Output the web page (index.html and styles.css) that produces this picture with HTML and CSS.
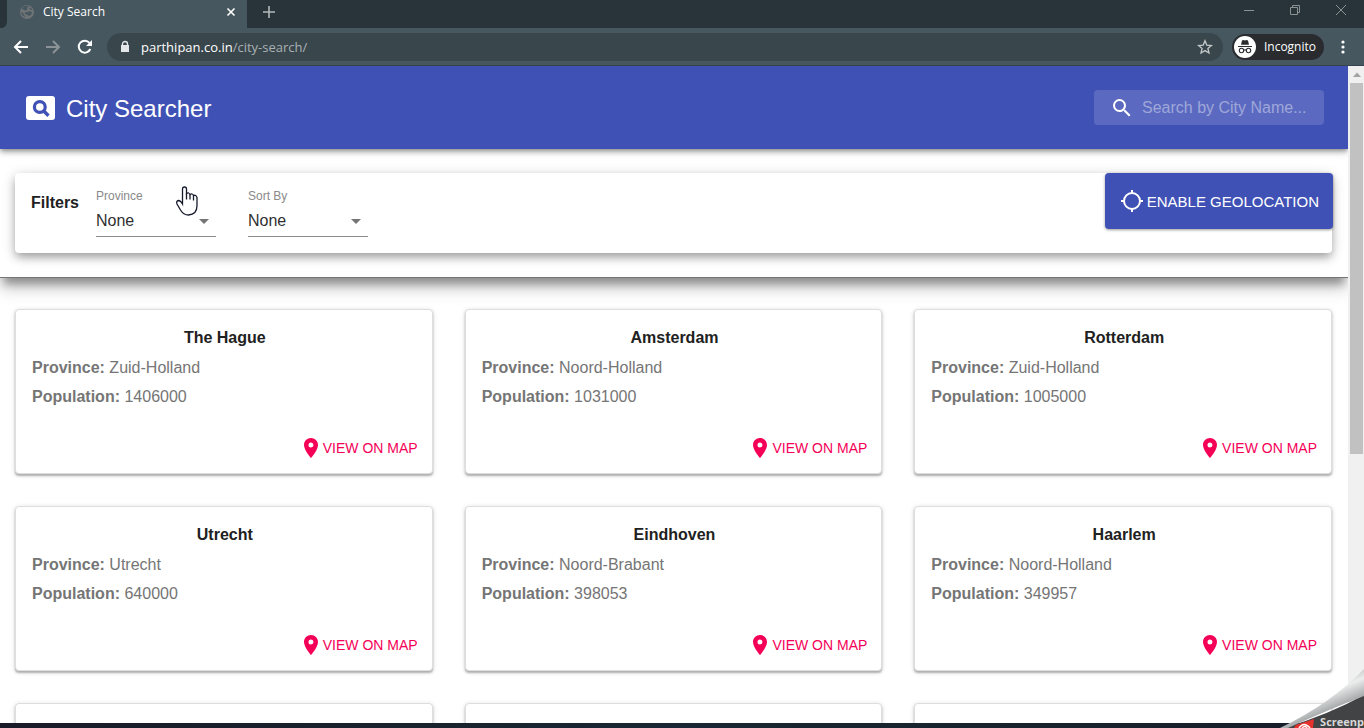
FILE: index.html
```html
<!DOCTYPE html>
<html lang="en">
<head>
<meta charset="utf-8">
<title>City Search</title>
<link rel="stylesheet" href="styles.css">
</head>
<body>
<svg class="defs" aria-hidden="true">
  <symbol id="pin" viewBox="0 0 24 24"><path fill="currentColor" d="M12 2C8.13 2 5 5.13 5 9c0 5.25 7 13 7 13s7-7.75 7-13c0-3.87-3.13-7-7-7zm0 9.500a2.500 2.500 0 1 1 0-5 2.500 2.500 0 0 1 0 5z"/></symbol>
  <symbol id="drop" viewBox="0 0 24 24"><path fill="currentColor" d="M7 10l5 5 5-5z"/></symbol>
</svg>
<div class="tabstrip">
  <div class="tab-prev"></div>
  <div class="tab">
    <svg class="favicon" viewBox="0 0 16 16"><circle cx="8" cy="8" r="7" fill="#6e7375"/><path fill="#465760" d="M2.500 5c1.500-.2 2.500.6 3.500 1.500 1.200.3 1.500-1 2.500-1.500L8 3.500l2-1.300C6.500 1 3.500 2.500 2.500 5zM8 8l3-.7 2 1.200-1 2.500-2.500 1-1-1.500H6.500L5.500 9zM2 8l2 1 1 2 1.500 2C4 12.500 2.300 10.500 2 8zM11 3l2.500 2.500L12 6l-1.500-1z"/></svg>
    <span class="tab-title">City Search</span>
    <button class="icon-button" aria-label="Close tab"><svg width="10" height="10" viewBox="0 0 10 10"><path d="M1.500 1.500l7 7M8.500 1.500l-7 7" stroke="#fff" stroke-width="1.600"/></svg></button>
  </div>
  <button class="icon-button new-tab" aria-label="New tab"><svg width="14" height="14" viewBox="0 0 14 14"><path d="M7 1v12M1 7h12" stroke="#b3b8ba" stroke-width="1.600"/></svg></button>
  <div class="window-controls">
    <button class="icon-button" aria-label="Minimize"><svg width="12" height="12" viewBox="0 0 12 12"><path d="M1 6.500h10" stroke="#8b9194"/></svg></button>
    <button class="icon-button" aria-label="Restore"><svg width="12" height="12" viewBox="0 0 12 12"><path d="M1.500 3.500h7v7h-7zM3.500 3.500v-2h7v7h-2" fill="none" stroke="#8b9194"/></svg></button>
    <button class="icon-button" aria-label="Close window"><svg width="12" height="12" viewBox="0 0 12 12"><path d="M1 1l10 10M11 1L1 11" stroke="#8b9194"/></svg></button>
  </div>
</div>
<div class="toolbar">
  <div class="nav">
    <button class="icon-button" aria-label="Back"><svg width="16" height="16" viewBox="0 0 16 16"><path d="M15 8H2.500M8 2L2 8l6 6" fill="none" stroke="#fff" stroke-width="2"/></svg></button>
    <button class="icon-button" aria-label="Forward"><svg width="16" height="16" viewBox="0 0 16 16"><path d="M1 8h12.500M8 2l6 6-6 6" fill="none" stroke="#8b9397" stroke-width="2"/></svg></button>
    <button class="icon-button" aria-label="Reload"><svg width="16" height="16" viewBox="0 0 16 16"><path d="M13.300 10A6 6 0 1 1 12.500 4" fill="none" stroke="#fff" stroke-width="2"/><path d="M15 1v6H9z" fill="#fff"/></svg></button>
  </div>
  <div class="omnibox">
    <svg width="10" height="14" viewBox="0 0 10 14"><path d="M2.500 6V4a2.500 2.500 0 0 1 5 0v2" fill="none" stroke="#e4e6e7" stroke-width="1.400"/><path d="M1 5h8v7H1z" fill="#e4e6e7"/></svg>
    <span class="url"><span class="host">parthipan.co.in</span>/city-search/</span>
    <button class="icon-button" aria-label="Bookmark this page"><svg width="16" height="16" viewBox="0 0 16 16"><path d="M8 1.800l1.800 4.300 4.600.4-3.500 3 1.100 4.500L8 11.600 4 14l1.100-4.500-3.500-3 4.600-.4z" fill="none" stroke="#c3c8ca" stroke-width="1.300"/></svg></button>
  </div>
  <button class="incognito">
    <svg width="22" height="22" viewBox="0 0 22 22"><circle cx="11" cy="11" r="11" fill="#fff"/><path d="M7 8.800L8 4.500l1.300-.5 1.700.5 1.700-.5 1.300.5 1 4.300zM4 10h14v1H4z" fill="#292b2f"/><g fill="none" stroke="#292b2f" stroke-width="1.100"><circle cx="7.500" cy="14.500" r="2.200"/><circle cx="14.500" cy="14.500" r="2.200"/><path d="M9.700 14.200q1.300-.8 2.600 0"/></g></svg>
    Incognito
  </button>
  <button class="icon-button menu" aria-label="Menu"><svg width="4" height="14" viewBox="0 0 4 14" fill="#fff"><circle cx="2" cy="2" r="1.600"/><circle cx="2" cy="7" r="1.600"/><circle cx="2" cy="12" r="1.600"/></svg></button>
</div>
<div class="viewport">
  <div class="page">
    <header class="appbar">
      <svg class="logo" viewBox="0 0 29 24"><rect width="29" height="24" rx="3" fill="#fff"/><circle cx="13.800" cy="11" r="5.400" fill="none" stroke="#3f51b5" stroke-width="3.200"/><path d="M17.300 14.500l5.200 5.200" stroke="#3f51b5" stroke-width="3.400"/></svg>
      <h1>City Searcher</h1>
      <label class="search">
        <svg width="24" height="24" viewBox="0 0 24 24"><path fill="#fff" d="M15.500 14h-.79l-.28-.27A6.471 6.471 0 0 0 16 9.500 6.500 6.500 0 1 0 9.500 16c1.610 0 3.090-.59 4.230-1.570l.27.28v.79l5 4.990L20.490 19l-4.990-5zm-6 0C7.010 14 5 11.990 5 9.500S7.010 5 9.500 5 14 7.010 14 9.500 11.990 14 9.500 14z"/></svg>
        <input type="text" placeholder="Search by City Name..." aria-label="Search by City Name">
      </label>
    </header>
    <section class="filter-area">
      <div class="filters">
        <h2>Filters</h2>
        <div class="field">
          <label for="province">Province</label>
          <select id="province"><option>None</option></select>
          <svg class="arrow"><use href="#drop"/></svg>
        </div>
        <div class="field">
          <label for="sort">Sort By</label>
          <select id="sort"><option>None</option></select>
          <svg class="arrow"><use href="#drop"/></svg>
        </div>
        <button class="geo">
          <svg width="24" height="24" viewBox="0 0 24 24" fill="none" stroke="#fff" stroke-width="2"><circle cx="12" cy="12" r="8"/><path d="M12 1v3M12 20v3M1 12h3M20 12h3"/></svg>
          ENABLE GEOLOCATION
        </button>
      </div>
    </section>
    <main class="cities">
      <article class="card"><h3>The Hague</h3><p><b>Province:</b> Zuid-Holland</p><p><b>Population:</b> 1406000</p><button class="map"><svg><use href="#pin"/></svg>VIEW ON MAP</button></article>
      <article class="card"><h3>Amsterdam</h3><p><b>Province:</b> Noord-Holland</p><p><b>Population:</b> 1031000</p><button class="map"><svg><use href="#pin"/></svg>VIEW ON MAP</button></article>
      <article class="card"><h3>Rotterdam</h3><p><b>Province:</b> Zuid-Holland</p><p><b>Population:</b> 1005000</p><button class="map"><svg><use href="#pin"/></svg>VIEW ON MAP</button></article>
      <article class="card"><h3>Utrecht</h3><p><b>Province:</b> Utrecht</p><p><b>Population:</b> 640000</p><button class="map"><svg><use href="#pin"/></svg>VIEW ON MAP</button></article>
      <article class="card"><h3>Eindhoven</h3><p><b>Province:</b> Noord-Brabant</p><p><b>Population:</b> 398053</p><button class="map"><svg><use href="#pin"/></svg>VIEW ON MAP</button></article>
      <article class="card"><h3>Haarlem</h3><p><b>Province:</b> Noord-Holland</p><p><b>Population:</b> 349957</p><button class="map"><svg><use href="#pin"/></svg>VIEW ON MAP</button></article>
      <article class="card"></article>
      <article class="card"></article>
      <article class="card"></article>
    </main>
  </div>
  <div class="scrollbar">
    <svg width="8" height="5" viewBox="0 0 8 5"><path d="M0 5l4-4.500L8 5z" fill="#a3a3a3"/></svg>
    <div class="thumb"></div>
  </div>
</div>
<footer class="taskbar"></footer>
<svg class="cursor" viewBox="0 0 22 30"><path d="M6.500 17V3.500Q6.500 1.500 8.500 1.500T10.500 3.500V8Q13 6.500 14 9q2.500-1.500 3.500 1 2.500-1 3.500 2v8q0 9-8.500 9.500-5 0-8-5L1 18.500q-1-3 1.500-3.500 2 0 4 3.500z" fill="#fff" stroke="#161b2c" stroke-width="1.300"/><path d="M10.500 8v6M14 9v5M17.500 10v5" stroke="#161b2c" stroke-width="1.300"/></svg>
<div class="page-curl">
  <svg viewBox="0 0 84 60">
    <defs><linearGradient id="fold" x1="0" y1="0" x2="0.600" y2="1"><stop offset="0.300" stop-color="#a4a7a8"/><stop offset="0.550" stop-color="#eceded"/><stop offset="0.850" stop-color="#8f9394"/></linearGradient></defs>
    <path d="M4 60Q50 46 84 27V60z" fill="#424344"/>
    <path d="M0 60Q50 36 84 1V28Q50 41 8 60z" fill="url(#fold)"/>
    <path d="M16 57l18-6-1 9H14z" fill="#e5322d"/>
    <path d="M19 60q5-7 11 0M22 60q3-3 5 0" fill="none" stroke="#fff" stroke-width="1.500"/>
  </svg>
  <span>Screenp</span>
</div>
</body>
</html>
```
FILE: styles.css
```css
* { box-sizing: border-box; }
body {
  margin: 0;
  height: 100vh;
  display: flex;
  flex-direction: column;
  position: relative;
  overflow: hidden;
  background: #fff;
  font-family: "Liberation Sans", Arial, sans-serif;
  font-size: 16px;
  color: #212121;
}
h1, h2, h3, p { margin: 0; }
svg { flex: none; display: block; }
button { border: 0; padding: 0; background: none; font: inherit; color: inherit; }
.defs { position: absolute; width: 0; height: 0; }
.icon-button { display: flex; align-items: center; justify-content: center; }

.tabstrip {
  height: 28px;
  flex: none;
  display: flex;
  background: #29343a;
  font-family: "Open Sans", "Noto Sans", sans-serif;
}
.tab-prev { width: 7px; background: #29343a; border-bottom-right-radius: 6px; box-shadow: 3px 3px 0 #465760; }
.tab {
  width: 240px;
  display: flex;
  align-items: center;
  padding: 0 11px 4px 12px;
  background: #465760;
  color: #fff;
  font-size: 12px;
}
.favicon { width: 16px; height: 16px; margin-right: 8px; }
.tab-title { flex: 1; line-height: 16px; }
.new-tab { width: 44px; height: 24px; }
.window-controls { margin-left: auto; display: flex; height: 20px; }
.window-controls .icon-button { width: 46px; }

.toolbar {
  height: 38px;
  flex: none;
  display: flex;
  align-items: center;
  padding: 0 17px 0 13px;
  background: #465760;
  border-bottom: 1px solid #34434b;
  font-family: "Open Sans", "Noto Sans", sans-serif;
}
.nav { display: flex; gap: 16px; margin-right: 14px; }
.omnibox {
  flex: 1;
  height: 28px;
  display: flex;
  align-items: center;
  padding: 0 10px 0 13px;
  border-radius: 14px;
  background: #39464c;
}
.url { flex: 1; margin-left: 11px; font-size: 13px; line-height: 20px; color: #aab1b4; }
.host { color: #fff; }
.incognito {
  display: flex;
  align-items: center;
  gap: 8px;
  height: 26px;
  margin-left: 9px;
  padding: 0 8px 0 2px;
  border-radius: 13px;
  background: #292b2f;
  color: #fff;
  font-size: 12px;
}
.menu { width: 8px; margin-left: 15px; }

.viewport { flex: 1; min-height: 0; display: flex; overflow: hidden; }
.page { flex: 1; min-width: 0; overflow: hidden; }
.appbar {
  position: relative;
  display: flex;
  align-items: center;
  padding: 24px;
  background: #3f51b5;
  color: #fff;
  box-shadow: 0 2px 4px -1px rgba(0, 0, 0, .3), 0 4px 5px rgba(0, 0, 0, .16), 0 1px 10px rgba(0, 0, 0, .14);
}
.logo { width: 29px; height: 24px; margin: 0 11px 0 2px; }
h1 { padding-top: 2px; font-size: 24px; line-height: 32px; font-weight: 400; }
.search {
  display: flex;
  align-items: center;
  width: 230px;
  height: 35px;
  margin-left: auto;
  padding-left: 16px;
  border-radius: 4px;
  background: rgba(255, 255, 255, .15);
}
.search input {
  flex: 1;
  min-width: 0;
  margin-left: 8px;
  padding: 0;
  border: 0;
  outline: 0;
  background: none;
  font: inherit;
  color: #fff;
}
.search input::placeholder { color: #9fa7da; opacity: 1; }

.filter-area {
  padding: 24px 16px 24px 15px;
  border-bottom: 1px solid #757575;
  box-shadow: 0 10px 8px -4px rgba(0, 0, 0, .3), 0 10px 16px rgba(0, 0, 0, .22);
}
.filters {
  display: flex;
  align-items: flex-start;
  height: 80px;
  padding-left: 16px;
  border-radius: 4px;
  background: #fff;
  box-shadow: 0 5px 8px -1px rgba(0, 0, 0, .26), 0 3px 14px rgba(0, 0, 0, .2);
}
h2 { width: 65px; padding-top: 20px; font-size: 16px; line-height: 20px; }
.field { position: relative; width: 120px; margin: 16px 32px 0 0; }
.field label { display: block; font-size: 12px; line-height: 14px; color: #8a8a8a; }
.field select {
  width: 100%;
  height: 34px;
  padding: 2px 0 0;
  appearance: none;
  border: 0;
  border-bottom: 1px solid #8c8c8c;
  border-radius: 0;
  background: none;
  font: inherit;
  color: #303030;
}
.arrow { position: absolute; right: 0; bottom: 4px; width: 24px; height: 24px; color: #757575; pointer-events: none; }
.geo {
  display: flex;
  align-items: center;
  gap: 3px;
  height: 56px;
  margin: 0 -1px 0 auto;
  padding: 0 14px 0 15px;
  border-radius: 4px;
  background: #3f51b5;
  box-shadow: 0 1px 3px rgba(0, 0, 0, .4);
  color: #fff;
  font-size: 15px;
}

.cities {
  display: grid;
  grid-template-columns: repeat(3, 1fr);
  gap: 32px;
  padding: 31px 16px 32px 15px;
}
.card {
  display: flex;
  flex-direction: column;
  min-height: 165px;
  padding: 16px 14px 11px 16px;
  border: 1px solid #dedede;
  border-radius: 4px;
  background: #fff;
  box-shadow: 0 2px 2px rgba(0, 0, 0, .25), 0 1px 5px rgba(0, 0, 0, .15);
  color: #757575;
}
h3 { margin-bottom: 6px; font-size: 16px; line-height: 24px; text-align: center; color: #212121; }
.card p { margin-bottom: 5px; line-height: 24px; }
.map {
  display: flex;
  align-items: center;
  align-self: flex-end;
  margin-top: auto;
  font-size: 14px;
  line-height: 28px;
  color: #f50057;
}
.map svg { width: 24px; height: 24px; }

.scrollbar { width: 16px; display: flex; flex-direction: column; align-items: center; padding: 6px 1px 0 2px; background: #f0f0f0; }
.thumb { width: 100%; height: 57%; margin-top: 6px; background: #c1c1c1; }
.taskbar { height: 5px; flex: none; background: linear-gradient(90deg, #1a1b28, #182733 50%, #171d29); }

.cursor { position: absolute; left: 176px; top: 185px; width: 22px; height: 31px; }
.page-curl { position: absolute; right: 0; bottom: 0; width: 84px; height: 60px; overflow: hidden; }
.page-curl span { position: absolute; right: 0; bottom: 0; font: bold 11px/12px "Open Sans", sans-serif; color: #d8d8d8; }
```
